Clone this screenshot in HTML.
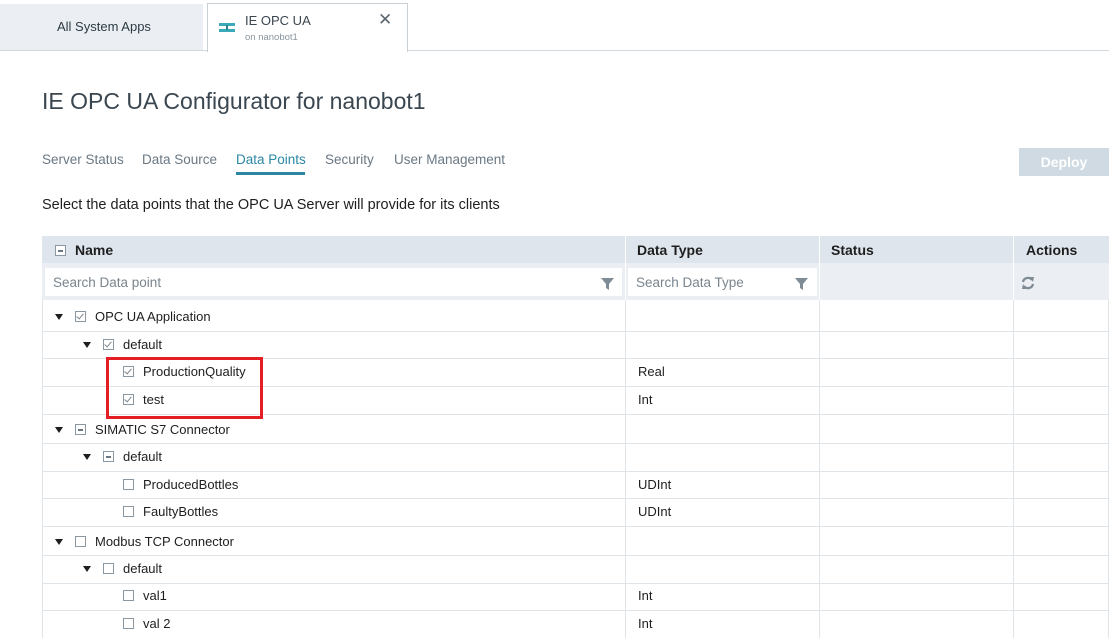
<!DOCTYPE html>
<html><head><style>
body{margin:0;width:1109px;height:638px;overflow:hidden;background:#fff;font-family:"Liberation Sans",sans-serif;color:#1e1e1e;position:relative}
.a{position:absolute;white-space:nowrap}
.cb{position:absolute;width:9px;height:9px;border:1px solid #8a96a0;background:#fff}
.cb.c::after{content:"";position:absolute;left:2px;top:0px;width:3px;height:6px;border:solid #7a8690;border-width:0 1.5px 1.5px 0;transform:rotate(40deg)}
.cb.m::after{content:"";position:absolute;left:2px;top:4px;width:5px;height:1.5px;background:#6a7680}
.ar{position:absolute;width:0;height:0;border-left:4.5px solid transparent;border-right:4.5px solid transparent;border-top:6px solid #1e1e1e}
.t{position:absolute;font-size:13px;white-space:nowrap}
.hl{position:absolute;left:42px;width:1067px;height:1px;background:#dfe4e8}
.vl{position:absolute;width:1px;background:#dfe4e8;top:300px;height:338px}
</style></head><body>
<div class="a" style="left:0;top:4px;width:203px;height:46px;background:#ebeff3"></div>
<div class="a" style="left:0;top:50px;width:1109px;height:1px;background:#d0d7dd"></div>
<div class="a" style="left:207px;top:3px;width:199px;height:48px;background:#fff;border:1px solid #c8d0d6;border-bottom:none"></div>
<div class="a" style="left:57px;top:19px;font-size:13px;color:#2d3a44">All System Apps</div>
<svg class="a" style="left:219px;top:23px" width="16" height="10"><rect x="0" y="0" width="16" height="3" fill="#3aa9b8"/><rect x="0" y="6" width="16" height="3" fill="#3aa9b8"/><rect x="7" y="2" width="2" height="5" fill="#2a7f8c"/></svg>
<div class="a" style="left:245px;top:13px;font-size:13px;color:#3a4650">IE OPC UA</div>
<div class="a" style="left:245px;top:32px;font-size:9.5px;color:#8a959e">on nanobot1</div>
<div class="a" style="left:378px;top:10px;font-size:17px;color:#5a6670">✕</div>
<div class="a" style="left:42px;top:88px;font-size:23px;color:#3a4650">IE OPC UA Configurator for nanobot1</div>
<div class="a" style="left:42px;top:152px;font-size:13.5px;color:#6a7884">Server Status</div>
<div class="a" style="left:142px;top:152px;font-size:13.5px;color:#6a7884">Data Source</div>
<div class="a" style="left:236px;top:152px;font-size:13.5px;color:#2b87a3">Data Points</div>
<div class="a" style="left:236px;top:172px;width:69px;height:3px;background:#2b87a3"></div>
<div class="a" style="left:325px;top:152px;font-size:13.5px;color:#6a7884">Security</div>
<div class="a" style="left:394px;top:152px;font-size:13.5px;color:#6a7884">User Management</div>
<div class="a" style="left:1019px;top:148px;width:90px;height:28px;background:#cfdae2;color:#fff;font-size:14px;font-weight:bold;text-align:center;line-height:28px">Deploy</div>
<div class="a" style="left:42px;top:197px;font-size:14.5px">Select the data points that the OPC UA Server will provide for its clients</div>
<div class="a" style="left:42px;top:236px;width:1067px;height:27px;background:#dfe5ec"></div>
<div class="a" style="left:42px;top:263px;width:1067px;height:37px;background:#ebeff3"></div>
<div class="a" style="left:625px;top:236px;width:1px;height:64px;background:#fff"></div>
<div class="a" style="left:819px;top:236px;width:1px;height:64px;background:#fff"></div>
<div class="a" style="left:1013px;top:236px;width:1px;height:64px;background:#fff"></div>
<div class="cb m" style="left:55px;top:245px;border-color:#8a96a0;background:#fff"></div>
<div class="a" style="left:75px;top:242px;font-size:14px;font-weight:bold">Name</div>
<div class="a" style="left:637px;top:242px;font-size:14px;font-weight:bold">Data Type</div>
<div class="a" style="left:831px;top:242px;font-size:14px;font-weight:bold">Status</div>
<div class="a" style="left:1026px;top:242px;font-size:14px;font-weight:bold">Actions</div>
<div class="a" style="left:45px;top:268px;width:577px;height:28px;background:#fff"></div>
<div class="a" style="left:628px;top:268px;width:189px;height:28px;background:#fff"></div>
<div class="a" style="left:53px;top:275px;font-size:13.5px;color:#7a858e">Search Data point</div>
<div class="a" style="left:636px;top:275px;font-size:13.5px;color:#7a858e">Search Data Type</div>
<svg class="a" style="left:601px;top:278px" width="13" height="12"><path d="M0 0H13L8 6V12L5 10V6Z" fill="#7f8b95"/></svg>
<svg class="a" style="left:795px;top:278px" width="13" height="12"><path d="M0 0H13L8 6V12L5 10V6Z" fill="#7f8b95"/></svg>
<svg class="a" style="left:1021px;top:276px" width="14" height="14" viewBox="0 0 14 14"><path d="M2 6A5 5 0 0 1 11 4" stroke="#7f8b95" stroke-width="2.2" fill="none"/><path d="M9 1L13 1L12 6Z" fill="#7f8b95"/><path d="M12 8A5 5 0 0 1 3 10" stroke="#7f8b95" stroke-width="2.2" fill="none"/><path d="M5 13L1 13L2 8Z" fill="#7f8b95"/></svg>
<div class="vl" style="left:42px"></div>
<div class="vl" style="left:625px"></div>
<div class="vl" style="left:819px"></div>
<div class="vl" style="left:1013px"></div>
<div class="vl" style="left:1108px"></div>
<div class="hl" style="top:331px"></div><div class="hl" style="top:358px"></div><div class="hl" style="top:386px"></div>
<div class="hl" style="top:414px"></div><div class="hl" style="top:443px"></div><div class="hl" style="top:471px"></div>
<div class="hl" style="top:498px"></div><div class="hl" style="top:526px"></div><div class="hl" style="top:555px"></div>
<div class="hl" style="top:583px"></div><div class="hl" style="top:610px"></div>

<div class="ar" style="left:55px;top:314px"></div><div class="cb c" style="left:75px;top:311px"></div><div class="t" style="left:95px;top:309px">OPC UA Application</div>
<div class="ar" style="left:83px;top:342px"></div><div class="cb c" style="left:103px;top:339px"></div><div class="t" style="left:123px;top:337px">default</div>
<div class="cb c" style="left:123px;top:366px"></div><div class="t" style="left:143px;top:364px">ProductionQuality</div><div class="t" style="left:638px;top:364px">Real</div>
<div class="cb c" style="left:123px;top:394px"></div><div class="t" style="left:143px;top:392px">test</div><div class="t" style="left:638px;top:392px">Int</div>
<div class="ar" style="left:55px;top:427px"></div><div class="cb m" style="left:75px;top:424px"></div><div class="t" style="left:95px;top:422px">SIMATIC S7 Connector</div>
<div class="ar" style="left:83px;top:454px"></div><div class="cb m" style="left:103px;top:451px"></div><div class="t" style="left:123px;top:449px">default</div>
<div class="cb" style="left:123px;top:479px"></div><div class="t" style="left:143px;top:477px">ProducedBottles</div><div class="t" style="left:638px;top:477px">UDInt</div>
<div class="cb" style="left:123px;top:506px"></div><div class="t" style="left:143px;top:504px">FaultyBottles</div><div class="t" style="left:638px;top:504px">UDInt</div>
<div class="ar" style="left:55px;top:539px"></div><div class="cb" style="left:75px;top:536px"></div><div class="t" style="left:95px;top:534px">Modbus TCP Connector</div>
<div class="ar" style="left:83px;top:566px"></div><div class="cb" style="left:103px;top:563px"></div><div class="t" style="left:123px;top:561px">default</div>
<div class="cb" style="left:123px;top:590px"></div><div class="t" style="left:143px;top:588px">val1</div><div class="t" style="left:638px;top:588px">Int</div>
<div class="cb" style="left:123px;top:618px"></div><div class="t" style="left:143px;top:616px">val 2</div><div class="t" style="left:638px;top:616px">Int</div>

<div class="a" style="left:106px;top:357px;width:151px;height:56px;border:3.5px solid #e31e24"></div>
</body></html>
